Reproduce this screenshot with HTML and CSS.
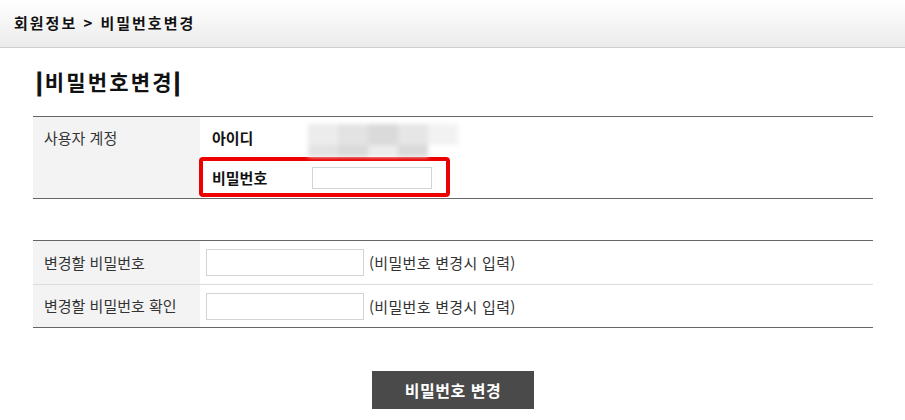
FILE: index.html
```html
<!DOCTYPE html>
<html lang="ko">
<head>
<meta charset="utf-8">
<title>비밀번호변경</title>
<link rel="stylesheet" href="styles.css">
</head>
<body>
<div class="topbar">
  <div class="crumb">회원정보 &gt; 비밀번호변경</div>
</div>
<div class="page">
  <h1 class="title"><span class="bar">|</span>비밀번호변경<span class="bar">|</span></h1>

  <div class="account">
    <div class="label-cell">사용자 계정</div>
    <div class="account-body">
      <div class="id-row">
        <span class="field-name">아이디</span>
        <div class="blurred">
          <div class="blur-top">
            <span class="b1"></span><span class="b2"></span><span class="b3"></span><span class="b4"></span><span class="b5"></span>
          </div>
          <div class="blur-bottom">
            <span class="b2"></span><span class="b3"></span><span class="b1"></span><span class="b3"></span>
          </div>
        </div>
      </div>
      <div class="pw-box">
        <span class="field-name pw-name">비밀번호</span>
        <input class="pw-input" type="password">
      </div>
    </div>
  </div>

  <div class="change">
    <div class="row">
      <div class="label-cell mid">변경할 비밀번호</div>
      <div class="value-cell">
        <input class="text-input" type="password">
        <span class="hint">(비밀번호 변경시 입력)</span>
      </div>
    </div>
    <div class="row">
      <div class="label-cell mid">변경할 비밀번호 확인</div>
      <div class="value-cell">
        <input class="text-input" type="password">
        <span class="hint">(비밀번호 변경시 입력)</span>
      </div>
    </div>
  </div>

  <div class="actions">
    <button class="submit" type="button">비밀번호 변경</button>
  </div>
</div>
</body>
</html>
```

FILE: styles.css
```css
* { box-sizing: border-box; }
html, body {
  margin: 0;
  padding: 0;
  background: #fff;
  font-family: "Noto Sans CJK KR", "Noto Sans", sans-serif;
  color: #222;
}
.topbar {
  height: 48px;
  background: linear-gradient(#ffffff, #ebebeb);
  border-bottom: 1px solid #cfcfcf;
  display: flex;
  align-items: center;
  padding-left: 14px;
}
.crumb {
  font-size: 15px;
  font-weight: 700;
  letter-spacing: 2px;
  color: #111;
  margin-top: -3px;
}
.page {
  padding: 0 32px 0 33px;
}
.title {
  margin: 20px 0 22px 3px;
  font-size: 21px;
  line-height: 26px;
  font-weight: 700;
  letter-spacing: 2.2px;
  color: #111;
}
.bar {
  font-weight: 900;
  -webkit-text-stroke: 1.2px #111;
}
.account {
  display: grid;
  grid-template-columns: 167px 1fr;
  border-top: 1px solid #666;
  border-bottom: 1px solid #666;
}
.label-cell {
  background: #f3f3f3;
  padding: 11px 11px;
  font-size: 15px;
  line-height: 20px;
  color: #333;
}
.account-body {
  padding-bottom: 1px;
}
.id-row {
  height: 40px;
  display: flex;
  align-items: center;
  padding-left: 12px;
}
.field-name {
  font-size: 15px;
  font-weight: 700;
  color: #111;
  width: 96px;
}
.blurred {
  align-self: flex-end;
  height: 33px;
  width: 150px;
  filter: blur(2px);
  display: flex;
  flex-direction: column;
}
.blur-top, .blur-bottom {
  display: flex;
}
.blur-top { height: 21px; }
.blur-bottom { height: 12px; width: 120px; }
.blurred span { flex: 1; }
.b1 { background: #ececec; }
.b2 { background: #e3e3e3; }
.b3 { background: #dadada; }
.b4 { background: #e6e6e6; }
.b5 { background: #f2f2f2; }
.pw-box {
  margin-left: -1px;
  width: 251px;
  height: 40px;
  border: 4px solid #ee0000;
  border-radius: 4px;
  display: flex;
  align-items: center;
  padding-left: 9px;
}
.pw-name { width: 100px; }
.pw-input {
  width: 120px;
  height: 22px;
  border: 1px solid #d4d4d4;
  margin: 1px 0 0 0;
  padding: 0;
  background: #fff;
}
.change {
  margin-top: 41px;
  border-top: 1px solid #666;
  border-bottom: 1px solid #666;
}
.row {
  display: grid;
  grid-template-columns: 167px 1fr;
  height: 43px;
}
.row + .row {
  border-top: 1px solid #dcdcdc;
}
.label-cell.mid {
  display: flex;
  align-items: center;
  padding: 0 11px;
}
.value-cell {
  display: flex;
  align-items: center;
  padding-left: 6px;
}
.text-input {
  width: 158px;
  height: 27px;
  border: 1px solid #d4d4d4;
  margin: 0;
  padding: 0;
  background: #fff;
}
.hint {
  margin-left: 5px;
  font-size: 15px;
  letter-spacing: 0.3px;
  color: #333;
}
.actions {
  display: flex;
  justify-content: center;
  margin-top: 43px;
}
.submit {
  width: 162px;
  height: 38px;
  background: #4a4a4a;
  color: #fff;
  border: 0;
  font-family: "Noto Sans CJK KR", "Noto Sans", sans-serif;
  font-size: 16px;
  font-weight: 700;
  letter-spacing: 0.5px;
  padding: 0;
}
```
